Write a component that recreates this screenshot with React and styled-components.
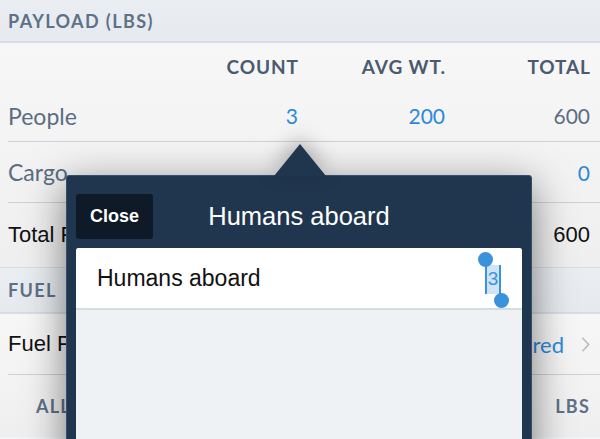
import React from 'react';
import styled, { createGlobalStyle } from 'styled-components';

const GlobalStyle = createGlobalStyle`
    html, body {
        margin: 0;
        padding: 0;
        background: #f3f4f5;
    }
`;

const rows = [
    { label: 'People', count: '3', avg: '200', total: '600' },
    { label: 'Cargo', count: '', avg: '', total: '0', blueTotal: true },
];

function App() {
    return (
        <>
            <GlobalStyle />
            <Page>
                <SectionHeader>Payload (lbs)</SectionHeader>
                <Table>
                    <HeaderRow>
                        <span />
                        <ColHead>Count</ColHead>
                        <ColHead>Avg wt.</ColHead>
                        <ColHead>Total</ColHead>
                    </HeaderRow>
                    {rows.map((r) => (
                        <Row key={r.label}>
                            <Label>{r.label}</Label>
                            <Value $blue>{r.count}</Value>
                            <Value $blue>{r.avg}</Value>
                            <Value $blue={r.blueTotal}>{r.total}</Value>
                        </Row>
                    ))}
                    <Row $tall>
                        <Label $dark>Total Payload</Label>
                        <span />
                        <span />
                        <Value $dark>600</Value>
                    </Row>
                </Table>
                <SectionHeader $bordered>Fuel</SectionHeader>
                <Table>
                    <LinkRow>
                        <Label $dark>Fuel Policy</Label>
                        <LinkValue>
                            Required
                            <Chevron viewBox="0 0 10 18">
                                <path d="M1.5 1.5 L8.5 9 L1.5 16.5" />
                            </Chevron>
                        </LinkValue>
                    </LinkRow>
                    <LinkRow $last>
                        <SubHead>Allowances</SubHead>
                        <SubHead>Lbs</SubHead>
                    </LinkRow>
                </Table>

                <Popover>
                    <Arrow />
                    <PopHeader>
                        <CloseButton>Close</CloseButton>
                        <PopTitle>Humans aboard</PopTitle>
                    </PopHeader>
                    <Card>
                        <FieldRow>
                            <FieldLabel>Humans aboard</FieldLabel>
                            <Selection>
                                <Knob $top />
                                3
                                <Knob />
                            </Selection>
                        </FieldRow>
                        <CardBody />
                    </Card>
                </Popover>
            </Page>
        </>
    );
}

export default App;

const Page = styled.div`
    position: relative;
    width: 600px;
    height: 439px;
    overflow: hidden;
    background: #f3f4f5;
    font-family: Lato, "Liberation Sans", sans-serif;
`;

const SectionHeader = styled.div`
    display: flex;
    align-items: center;
    padding-left: 8px;
    background: linear-gradient(#eaedf1, #e6eaee);
    border-bottom: 2px solid #d6dde4;
    border-top: ${(p) => (p.$bordered ? '1px solid #d6dde4' : 'none')};
    height: ${(p) => (p.$bordered ? '47px' : '43px')};
    box-sizing: border-box;
    color: #5d7189;
    font-size: 18px;
    font-weight: 700;
    letter-spacing: 1.4px;
    text-transform: uppercase;
`;

const Table = styled.div`
    padding-left: 8px;
    background: linear-gradient(#f7f7f7, #efefef);
`;

const grid = `
    display: grid;
    grid-template-columns: 1fr 140px 147px 145px;
    align-items: center;
    padding-right: 10px;
`;

const HeaderRow = styled.div`
    ${grid}
    height: 47px;
`;

const ColHead = styled.span`
    text-align: right;
    color: #4a5b70;
    font-size: 19px;
    font-weight: 700;
    text-transform: uppercase;
    letter-spacing: 0.9px;
    margin-right: -0.9px;
`;

const Row = styled.div`
    ${grid}
    height: ${(p) => (p.$tall ? '64px' : '51px')};
    border-bottom: ${(p) => (p.$tall ? 'none' : '1px solid #c9d1da')};
    &:nth-of-type(3) {
        height: 60px;
    }
`;

const Label = styled.span`
    white-space: nowrap;
    color: ${(p) => (p.$dark ? '#111' : '#5b6d82')};
    font-family: ${(p) => (p.$dark ? '"Liberation Sans", Arial, sans-serif' : 'Lato, sans-serif')};
    font-size: ${(p) => (p.$dark ? '22px' : '23px')};
`;

const Value = styled.span`
    text-align: right;
    color: ${(p) => (p.$blue ? '#2b8ad8' : p.$dark ? '#111' : '#5b6d82')};
    font-family: ${(p) => (p.$dark ? '"Liberation Sans", Arial, sans-serif' : 'Lato, sans-serif')};
    font-size: ${(p) => (p.$dark ? '22px' : '21px')};
`;

const LinkRow = styled.div`
    display: flex;
    align-items: center;
    justify-content: space-between;
    height: ${(p) => (p.$last ? '62px' : '60px')};
    padding-right: 10px;
    border-bottom: ${(p) => (p.$last ? 'none' : '1px solid #c9d1da')};
`;

const LinkValue = styled.span`
    display: flex;
    align-items: center;
    gap: 17px;
    color: #2b8ad8;
    font-size: 22px;
`;

const Chevron = styled.svg`
    width: 9px;
    height: 17px;
    fill: none;
    stroke: #b7bcc2;
    stroke-width: 1.8;
`;

const SubHead = styled.span`
    color: #5d7189;
    font-size: 18px;
    font-weight: 700;
    letter-spacing: 1.2px;
    text-transform: uppercase;
    &:first-child {
        padding-left: 28px;
    }
`;

const Popover = styled.div`
    position: absolute;
    left: 66px;
    top: 175px;
    width: 466px;
    height: 300px;
    box-sizing: border-box;
    padding: 18px 9px 0;
    background: #20364f;
    border: 1px solid #34506e;
    border-radius: 3px;
    box-shadow: 0 10px 40px rgba(0, 0, 0, 0.5);
`;

const Arrow = styled.div`
    position: absolute;
    top: -32px;
    left: 207px;
    width: 0;
    height: 0;
    border-left: 26px solid transparent;
    border-right: 26px solid transparent;
    border-bottom: 32px solid #20364f;
    filter: drop-shadow(0 -6px 10px rgba(0, 0, 0, 0.3));
`;

const PopHeader = styled.div`
    position: relative;
    display: flex;
    align-items: center;
    justify-content: center;
    height: 45px;
`;

const CloseButton = styled.button`
    position: absolute;
    left: 0;
    top: 0;
    width: 77px;
    height: 45px;
    border: none;
    border-radius: 3px;
    background: #0e1a27;
    color: #fff;
    font-family: "Liberation Sans", Arial, sans-serif;
    font-size: 18px;
    font-weight: 700;
`;

const PopTitle = styled.span`
    color: #fff;
    font-family: "Liberation Sans", Arial, sans-serif;
    font-size: 25.5px;
`;

const Card = styled.div`
    margin-top: 9px;
    border-radius: 3px;
    overflow: hidden;
    background: #eef2f5;
`;

const FieldRow = styled.div`
    display: flex;
    align-items: center;
    justify-content: space-between;
    height: 60px;
    padding: 0 21px 0 21px;
    background: #fff;
    border-bottom: 2px solid #d5dbe2;
`;

const FieldLabel = styled.span`
    color: #111;
    font-family: "Liberation Sans", Arial, sans-serif;
    font-size: 23px;
`;

const Selection = styled.span`
    position: relative;
    display: flex;
    align-items: center;
    justify-content: center;
    width: 12px;
    height: 29px;
    margin-top: 2px;
    background: #cfe4f6;
    border-left: 2px solid #3a92dc;
    border-right: 2px solid #3a92dc;
    color: #3a92dc;
    font-family: "Liberation Sans", Arial, sans-serif;
    font-size: 19px;
`;

const Knob = styled.span`
    position: absolute;
    width: 15px;
    height: 15px;
    border-radius: 50%;
    background: #3a92dc;
    ${(p) => (p.$top ? 'top: -13px; left: -9px;' : 'bottom: -14px; right: -10px;')}
`;

const CardBody = styled.div`
    height: 200px;
`;
